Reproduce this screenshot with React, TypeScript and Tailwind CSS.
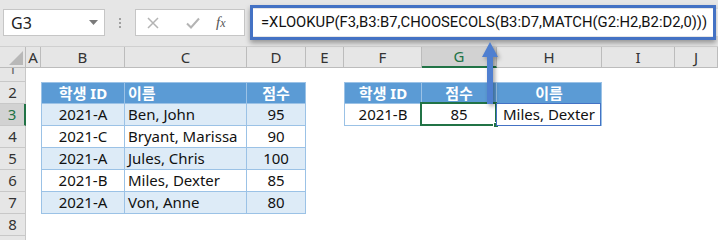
import React from 'react'

const COLS = ['A', 'B', 'C', 'D', 'E', 'F', 'G', 'H', 'I', 'J']

type Cell = { text?: string; cls?: string; extra?: React.ReactNode }

const tb = 'border-[#9bc2e6]'
const head = `bg-[#5b9bd5] text-white font-bold border-r border-b ${tb}`
const light = `bg-[#ddebf7] border-r border-b ${tb}`
const plain = `bg-white border-r border-b ${tb}`

const leftRows = [
  ['2021-A', 'Ben, John', '95'],
  ['2021-C', 'Bryant, Marissa', '90'],
  ['2021-A', 'Jules, Chris', '100'],
  ['2021-B', 'Miles, Dexter', '85'],
  ['2021-A', 'Von, Anne', '80']
]

function buildRows(): Cell[][] {
  const rows: Cell[][] = []
  for (let r = 1; r <= 8; r++) {
    const row: Cell[] = COLS.map(() => ({}))
    if (r === 2) {
      row[1] = { text: '학생 ID', cls: `${head} border-l border-t justify-center` }
      row[2] = { text: '이름', cls: `${head} border-t justify-start pl-[3px]` }
      row[3] = { text: '점수', cls: `${head} border-t justify-center` }
      row[5] = { text: '학생 ID', cls: `${head} border-l border-t justify-center` }
      row[6] = { text: '점수', cls: `${head} border-t justify-center` }
      row[7] = { text: '이름', cls: `${head} border-t justify-center` }
    }
    if (r >= 3 && r <= 7) {
      const d = leftRows[r - 3]
      const bg = r % 2 === 1 ? light : plain
      row[1] = { text: d[0], cls: `${bg} border-l justify-center` }
      row[2] = { text: d[1], cls: `${bg} justify-start pl-[3px]` }
      row[3] = { text: d[2], cls: `${bg} justify-center` }
    }
    if (r === 3) {
      row[5] = { text: '2021-B', cls: `${plain} border-l justify-center` }
      row[6] = {
        text: '85',
        cls: `${plain} justify-center relative`,
        extra: (
          <>
            <span className="absolute -left-[2px] -top-[2px] -right-[1px] -bottom-[1px] border-2 border-[#217346]" />
            <span className="absolute -right-[3px] -bottom-[3px] w-[6px] h-[6px] bg-[#217346] border border-white" />
          </>
        )
      }
      row[7] = {
        text: 'Miles, Dexter',
        cls: `${plain} justify-center relative`,
        extra: <span className="absolute -left-px -top-px right-0 -bottom-px border border-[#4472c4]" />
      }
    }
    rows.push(row)
  }
  return rows
}

function TopBar() {
  return (
    <div className="h-[47px] bg-[#e6e6e6] flex items-start pt-[9px] pl-[3px] border-b border-[#d0d0d0]">
      <div className="w-[102px] h-[27px] bg-white border border-[#c6c6c6] flex items-center justify-between pl-[7px] pr-[6px]">
        <span className="text-[16px] text-[#222]">G3</span>
        <svg width="9" height="5" viewBox="0 0 9 5">
          <path d="M0 0 L9 0 L4.5 5 Z" fill="#7a7a7a" />
        </svg>
      </div>
      <div className="w-[30px] h-[27px] flex flex-col items-center justify-center gap-[2px]">
        <span className="w-[2px] h-[2px] bg-[#a0a0a0]" />
        <span className="w-[2px] h-[2px] bg-[#a0a0a0]" />
        <span className="w-[2px] h-[2px] bg-[#a0a0a0]" />
      </div>
      <div className="w-[110px] h-[27px] bg-white border border-[#c6c6c6] flex items-center">
        <svg className="ml-[11px]" width="12" height="12" viewBox="0 0 12 12">
          <path d="M1 1 L11 11 M11 1 L1 11" stroke="#b4b4b4" strokeWidth="1.5" />
        </svg>
        <svg className="ml-[27px]" width="14" height="12" viewBox="0 0 14 12">
          <path d="M1 6.5 L5 10.5 L13 1.5" stroke="#b4b4b4" strokeWidth="2" fill="none" />
        </svg>
        <span
          className="ml-[16px] text-[15px] italic text-[#555] leading-none"
          style={{ fontFamily: '"Liberation Serif", serif' }}
        >
          f<span className="text-[12px]">x</span>
        </span>
      </div>
      <div className="flex-1 h-[27px] ml-[5px] bg-white flex items-center pl-[11px] overflow-hidden">
        <span
          className="text-[14.8px] text-[#111] whitespace-nowrap"
          style={{ fontFamily: 'Roboto, "Noto Sans", sans-serif' }}
        >
          =XLOOKUP(F3,B3:B7,CHOOSECOLS(B3:D7,MATCH(G2:H2,B2:D2,0)))
        </span>
      </div>
    </div>
  )
}

export default function App() {
  const rows = buildRows()
  return (
    <div
      className="relative w-[718px] h-[240px] overflow-hidden bg-white"
      style={{ fontFamily: '"Noto Sans", "Noto Sans CJK KR", sans-serif' }}
    >
      <TopBar />
      <div className="grid grid-cols-[26px_15px_84px_122px_59px_38px_78px_75px_105px_73px_1fr] grid-rows-[21px_14px_repeat(7,22px)_1fr] h-[193px]">
        <div className="bg-[#e6e6e6] border-r border-b border-[#bcbcbc] flex items-end justify-end p-[2px]">
          <svg width="14" height="14" viewBox="0 0 14 14">
            <path d="M14 0 L14 14 L0 14 Z" fill="#b8b8b8" />
          </svg>
        </div>
        {COLS.map((c) => (
          <div
            key={c}
            className={
              c === 'G'
                ? 'bg-[#d2d2d2] border-r border-[#bcbcbc] border-b-2 border-b-[#217346] text-[#217346] flex items-center justify-center text-[15px]'
                : 'bg-[#e6e6e6] border-r border-b border-[#bcbcbc] text-[#333] flex items-center justify-center text-[15px]'
            }
          >
            {c}
          </div>
        ))}
        {rows.map((row, i) => {
          const n = i + 1
          return (
            <React.Fragment key={n}>
              <div
                className={
                  n === 3
                    ? 'bg-[#d2d2d2] border-b border-[#c8c8c8] border-r-2 border-r-[#217346] text-[#217346] flex items-center justify-center text-[15px]'
                    : 'bg-[#e6e6e6] border-b border-r border-[#c8c8c8] text-[#333] flex items-center justify-center text-[15px] overflow-hidden'
                }
              >
                {n === 1 ? <span className="-mt-[12px] text-[#666]">1</span> : n}
              </div>
              {row.map((cell, j) => (
                <div
                  key={j}
                  className={`flex items-center text-[15px] text-[#111] whitespace-nowrap ${cell.cls ?? ''}`}
                >
                  {cell.text}
                  {cell.extra}
                </div>
              ))}
            </React.Fragment>
          )
        })}
        <div className="bg-[#e6e6e6] border-r border-[#c8c8c8]" />
      </div>

      {/* formula bar highlight */}
      <div className="absolute left-[250px] top-[5px] w-[466px] h-[35px] border-[3px] border-[#4472c4] shadow-[0_3px_5px_rgba(0,0,0,0.35)]" />

      {/* arrow */}
      <svg
        className="absolute left-[480px] top-[41px]"
        width="20"
        height="64"
        viewBox="0 0 20 64"
        style={{ filter: 'drop-shadow(2px 2px 2px rgba(0,0,0,0.35))' }}
      >
        <path d="M10 1 L18 16 L13 16 L13 63 L7 63 L7 16 L2 16 Z" fill="#4f7fd0" />
      </svg>
    </div>
  )
}
